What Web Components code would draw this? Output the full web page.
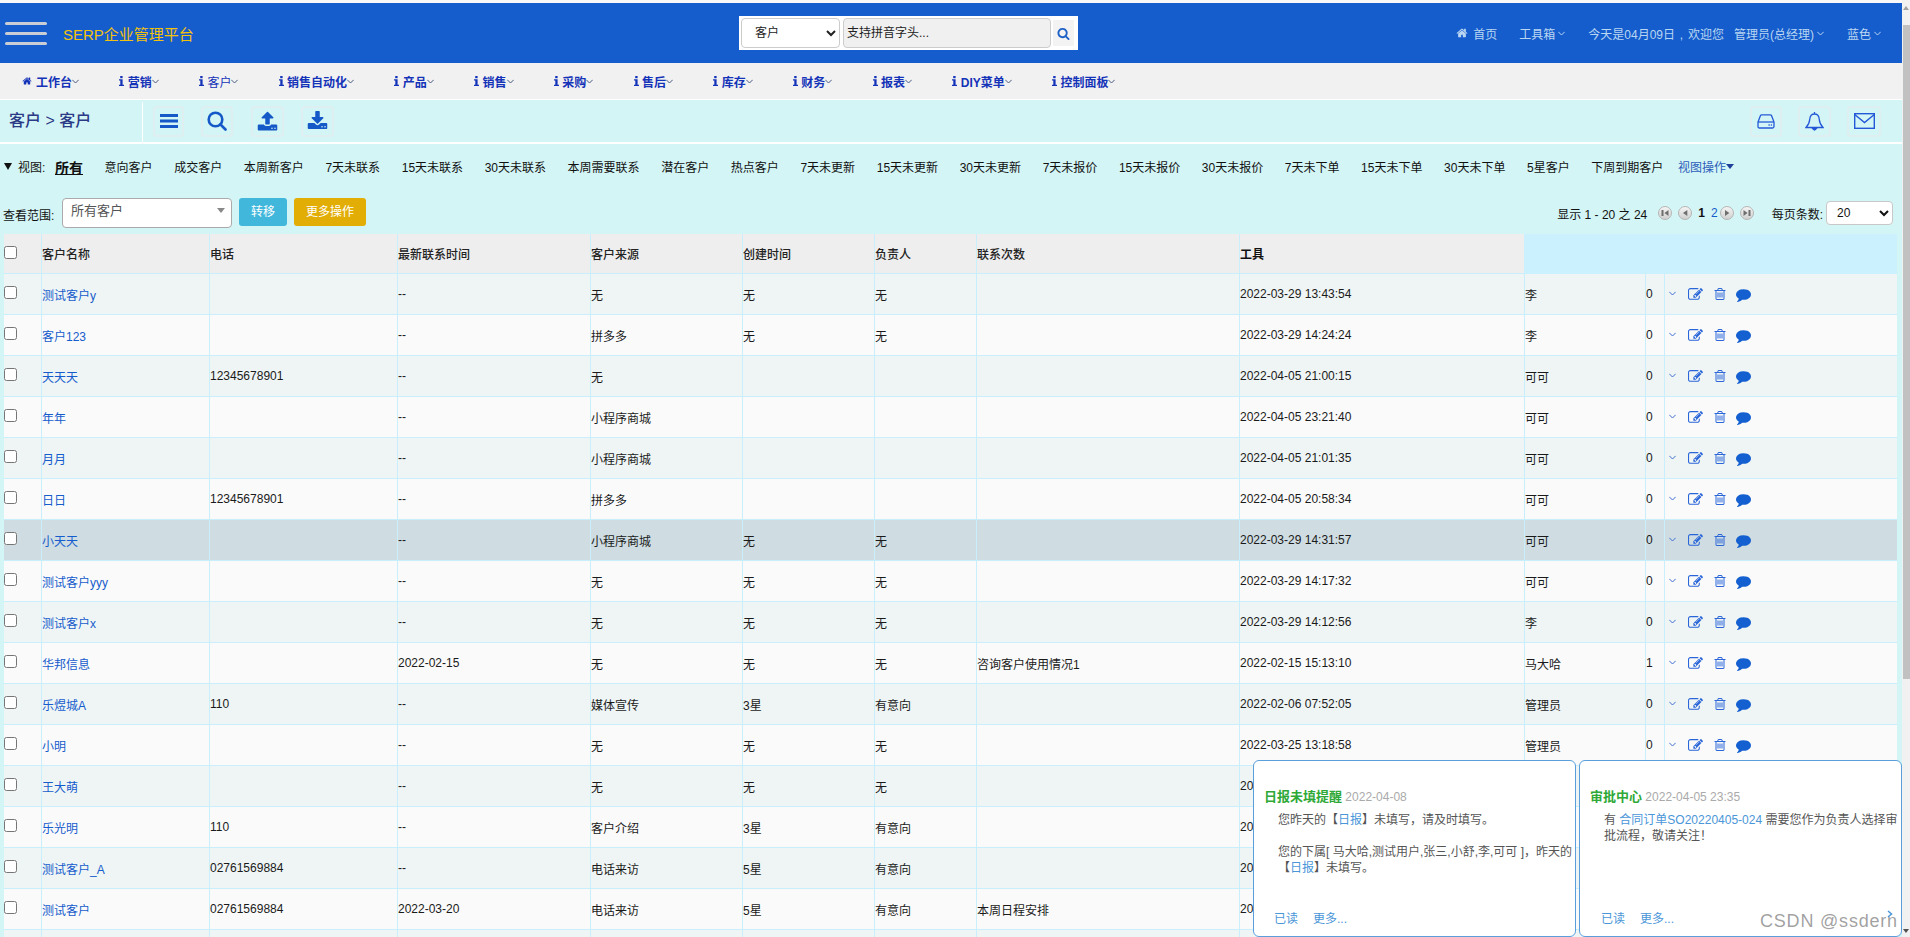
<!DOCTYPE html>
<html lang="zh">
<head>
<meta charset="utf-8">
<title>SERP</title>
<style>
    html, body { margin: 0; padding: 0; height: 100%; overflow: hidden; background: #fff; }
    body { font: 12px "Liberation Sans", "Noto Sans CJK SC", sans-serif; color: #1a1a1a; }
</style>
</head>
<body>
<app-shell>
    <main-header></main-header>
    <main-menu></main-menu>
    <page-toolbar title-text="客户 > 客户"></page-toolbar>
    <view-tabs></view-tabs>
    <list-controls></list-controls>
    <customer-table></customer-table>
    <notice-stack>
        <notice-card heading="日报未填提醒" time="2022-04-08" offset="10">
            您昨天的【<a>日报</a>】未填写，请及时填写。<br><br>您的下属[ 马大哈,测试用户,张三,小舒,李,可可 ]，昨天的<br>【<a>日报</a>】未填写。
        </notice-card>
        <notice-card heading="审批中心" time="2022-04-05 23:35" offset="11">
            有 <a>合同订单SO20220405-024</a> 需要您作为负责人选择审<br>批流程，敬请关注！
        </notice-card>
    </notice-stack>
    <water-mark></water-mark>
</app-shell>

<script>
const FONT = '"Liberation Sans", "Noto Sans CJK SC", sans-serif';

const ICONS = {
    home: 'M1472 992v480q0 26-19 45t-45 19h-384v-384h-256v384h-384q-26 0-45-19t-19-45v-480q0-1 .5-3t.5-3l575-474 575 474q1 2 1 6zm223-69l-62 74q-8 9-21 11h-3q-13 0-21-7l-692-577-692 577q-12 8-24 7-13-2-21-11l-62-74q-8-10-7-23.5t11-21.5l719-599q32-26 76-26t76 26l244 204v-195q0-14 9-23t23-9h192q14 0 23 9t9 23v408l219 182q10 8 11 21.5t-7 23.5z',
    search: 'M1216 832q0-185-131.500-316.500t-316.500-131.500-316.500 131.500-131.500 316.500 131.500 316.500 316.500 131.500 316.500-131.500 131.500-316.500zm512 832q0 52-38 90t-90 38q-54 0-90-38l-343-342q-179 124-399 124-143 0-273.500-55.500t-225-150-150-225-55.500-273.500 55.500-273.500 150-225 225-150 273.500-55.500 273.500 55.500 225 150 150 225 55.500 273.500q0 220-124 399l343 343q37 37 37 90z',
    edit: 'M888 1184l116-116-152-152-116 116v56h96v96h56zm440-720q-16-16-33 1l-350 350q-17 17-1 33t33-1l350-350q17-17 1-33zm80 594v190q0 119-84.500 203.500t-203.500 84.500h-832q-119 0-203.500-84.500t-84.500-203.500v-832q0-119 84.500-203.500t203.500-84.500h832q63 0 117 25 15 7 18 23 3 17-9 29l-49 49q-14 14-32 8-23-6-45-6h-832q-66 0-113 47t-47 113v832q0 66 47 113t113 47h832q66 0 113-47t47-113v-126q0-13 9-22l64-64q15-15 35-7t20 29zm-96-738l288 288-672 672h-288v-288zm444 132l-92 92-288-288 92-92q28-28 68-28t68 28l152 152q28 28 28 68t-28 68z',
    trash: 'M704 736v576q0 14-9 23t-23 9h-64q-14 0-23-9t-9-23v-576q0-14 9-23t23-9h64q14 0 23 9t9 23zm256 0v576q0 14-9 23t-23 9h-64q-14 0-23-9t-9-23v-576q0-14 9-23t23-9h64q14 0 23 9t9 23zm256 0v576q0 14-9 23t-23 9h-64q-14 0-23-9t-9-23v-576q0-14 9-23t23-9h64q14 0 23 9t9 23zm128 724v-948h-896v948q0 22 7 40.500t14.500 27 10.500 8.500h832q3 0 10.500-8.500t14.500-27 7-40.500zm-672-1076h448l-48-117q-7-9-17-11h-317q-10 2-17 11zm928 32v64q0 14-9 23t-23 9h-96v948q0 83-47 143.500t-113 60.500h-832q-66 0-113-58.500t-47-141.500v-952h-96q-14 0-23-9t-9-23v-64q0-14 9-23t23-9h309l70-167q15-37 54-63t79-26h320q40 0 79 26t54 63l70 167h309q14 0 23 9t9 23z',
    comment: 'M1792 896q0 174-120 321.500t-326 233-450 85.500q-70 0-145-8-198 175-460 242-49 14-114 22-17 2-30.500-9t-17.500-29v-1q-3-4-.5-12t2-10 4.500-9.500l6-9 7-8.500 8-9q7-8 31-34.500t34.500-38 31-39.500 32.500-51 27-59 26-76q-157-89-247.500-220t-90.500-281q0-130 71-248.500t191-204.500 286-136.500 348-50.500q244 0 450 85.500t326 233 120 321.500z',
    upload: 'M1344 1472q0-26-19-45t-45-19-45 19-19 45 19 45 45 19 45-19 19-45zm256 0q0-26-19-45t-45-19-45 19-19 45 19 45 45 19 45-19 19-45zm128-224v320q0 40-28 68t-68 28h-1472q-40 0-68-28t-28-68v-320q0-40 28-68t68-28h427q21 56 70.500 92t110.500 36h256q61 0 110.500-36t70.500-92h427q40 0 68 28t28 68zm-325-648q-17 40-59 40h-256v448q0 26-19 45t-45 19h-256q-26 0-45-19t-19-45v-448h-256q-42 0-59-40-17-39 14-69l448-448q18-19 45-19t45 19l448 448q31 30 14 69z',
    download: 'M1344 1344q0-26-19-45t-45-19-45 19-19 45 19 45 45 19 45-19 19-45zm256 0q0-26-19-45t-45-19-45 19-19 45 19 45 45 19 45-19 19-45zm128-224v320q0 40-28 68t-68 28h-1472q-40 0-68-28t-28-68v-320q0-40 28-68t68-28h465l135 136q58 56 136 56t136-56l136-136h464q40 0 68 28t28 68zm-325-569q17 41-14 70l-448 448q-18 19-45 19t-45-19l-448-448q-31-29-14-70 17-39 59-39h256v-448q0-26 19-45t45-19h256q26 0 45 19t19 45v448h256q42 0 59 39z'
};

class UiIcon extends HTMLElement {
    constructor() {
        super();
        const shadow = this.attachShadow({ mode: 'open' });
        const size = this.getAttribute('size') || 14;
        shadow.innerHTML = `
        <style>
            :host { display: inline-flex; flex: none; line-height: 0; }
            svg { display: block; fill: currentColor; }
        </style>
        <svg width="${size}" height="${size}" viewBox="0 0 1792 1792"><path d="${ICONS[this.getAttribute('name')]}"/></svg>`;
    }
}
customElements.define('ui-icon', UiIcon);

// the small serif "i" in front of the menu entries
class InfoMark extends HTMLElement {
    constructor() {
        super();
        this.attachShadow({ mode: 'open' }).innerHTML = `
        <style>
            :host { display: inline-flex; flex: none; line-height: 0; margin-right: 3.400px; }
        </style>
        <svg width="5" height="10" viewBox="0 0 5 10" fill="currentColor"><rect x="1.200" y="0" width="2.400" height="2.200"/><path d="M0 3.200H3.600V8.800H5V10H0V8.800H1.300V4.400H0z"/></svg>`;
    }
}
customElements.define('info-mark', InfoMark);

class ChevronMark extends HTMLElement {
    constructor() {
        super();
        this.attachShadow({ mode: 'open' }).innerHTML = `
        <style>
            :host { display: inline-flex; flex: none; line-height: 0; }
        </style>
        <svg width="7" height="5" viewBox="0 0 7 5" fill="none" stroke="currentColor" stroke-width="1"><polyline points="0.300,0.800 3.500,4 6.700,0.800"/></svg>`;
    }
}
customElements.define('chevron-mark', ChevronMark);

class AppShell extends HTMLElement {
    constructor() {
        super();
        this.attachShadow({ mode: 'open' }).innerHTML = `
        <style>
            :host { display: flex; height: 937px; overflow: hidden; }
            .main { position: relative; flex: 1; min-width: 0; padding-top: 3px; background: #d4f5f5; }
            .main::before { content: ""; position: absolute; left: 0; right: 0; top: 0; height: 3px; background: #f8f8f8; }
            .bar { width: 8px; flex: none; background: #f1f1f1; display: flex; flex-direction: column; align-items: center; }
            .thumb { width: 7px; margin-left: 1px; height: 654px; margin-top: 15px; background: #c1c1c1; }
            .up { margin-top: 6px; width: 0; height: 0; border: 3px solid transparent; border-top: 0; border-bottom: 4px solid #a0a0a0; }
            .down { margin-top: auto; margin-bottom: 4px; width: 0; height: 0; border: 3px solid transparent; border-bottom: 0; border-top: 4px solid #505050; }
        </style>
        <div class="main"><slot></slot></div>
        <div class="bar"><div class="up"></div><div class="thumb"></div><div class="down"></div></div>`;
    }
}
customElements.define('app-shell', AppShell);

class MainHeader extends HTMLElement {
    constructor() {
        super();
        this.attachShadow({ mode: 'open' }).innerHTML = `
        <style>
            :host { display: flex; align-items: center; height: 60px; background: #155ccc; font: 12px ${FONT}; }
            .burger { width: 42px; margin-left: 5px; display: flex; flex-direction: column; gap: 7px; }
            .burger i { display: block; height: 3px; border-radius: 2px; background: #c9ced6; }
            .brand { margin-left: 16px; font-size: 15px; color: #f4c20d; white-space: nowrap; width: 131px; }
            .search { margin-left: 545px; width: 339px; height: 34px; box-sizing: border-box; background: #fff; display: flex; align-items: center; padding: 0 4px 0 2px; }
            select { width: 99px; height: 30px; box-sizing: border-box; border: 1px solid #ccc; border-radius: 4px; background: #fff; padding-left: 9px; font: 12px ${FONT}; color: #222; }
            .input { width: 208px; height: 30px; margin-left: 3px; box-sizing: border-box; border: 1px solid #ccc; border-radius: 4px; background: #f0f0f0; padding-left: 3px; line-height: 28px; color: #222; white-space: nowrap; }
            .go { margin-left: 2px; width: 21px; height: 26px; background: #f3f3f3; color: #1f62c6; display: flex; align-items: center; justify-content: center; }
            nav { margin-left: auto; padding-right: 21px; display: flex; align-items: center; color: #b9d7f1; white-space: nowrap; }
            nav span { display: inline-flex; align-items: center; }
            chevron-mark { margin-left: 3px; }
        </style>
        <div class="burger"><i></i><i></i><i></i></div>
        <div class="brand">SERP企业管理平台</div>
        <div class="search">
            <select><option>客户</option></select>
            <div class="input">支持拼音字头...</div>
            <div class="go"><ui-icon name="search" size="13"></ui-icon></div>
        </div>
        <nav>
            <span><ui-icon name="home" size="12"></ui-icon><span style="margin-left:5px">首页</span></span>
            <span style="margin-left:22px">工具箱<chevron-mark></chevron-mark></span>
            <span style="margin-left:23px;word-spacing:1.500px">今天是04月09日 , 欢迎您</span>
            <span style="margin-left:10px">管理员(总经理)<chevron-mark></chevron-mark></span>
            <span style="margin-left:23px">蓝色<chevron-mark></chevron-mark></span>
        </nav>`;
    }
}
customElements.define('main-header', MainHeader);

class MainMenu extends HTMLElement {
    constructor() {
        super();
        const items = ['营销', '客户', '销售自动化', '产品', '销售', '采购', '售后', '库存', '财务', '报表', 'DIY菜单', '控制面板'];
        this.attachShadow({ mode: 'open' }).innerHTML = `
        <style>
            :host { display: flex; align-items: center; gap: 40.300px; height: 36px; padding-left: 22px; background: #f1f1f1; border-bottom: 1px solid #fff; font: 600 12px ${FONT}; color: #1433b8; }
            a { display: inline-flex; align-items: center; white-space: nowrap; }
            ui-icon { margin-right: 4px; }
            chevron-mark { color: #4a5a80; }
            .thin { font-weight: 400; }
        </style>
        <a><ui-icon name="home" size="10"></ui-icon>工作台<chevron-mark></chevron-mark></a>
        ${items.map(t => `<a class="${t === '客户' ? 'thin' : ''}"><info-mark></info-mark>${t}<chevron-mark></chevron-mark></a>`).join('')}`;
    }
}
customElements.define('main-menu', MainMenu);

class ToolButton extends HTMLElement {
    constructor() {
        super();
        this.attachShadow({ mode: 'open' }).innerHTML = `
        <style>
            :host { display: flex; align-items: center; justify-content: center; width: 33px; height: 31px; box-sizing: border-box; border: 2px solid #dfeef1; border-radius: 4px; color: #1558c8; }
        </style>
        <slot></slot>`;
    }
}
customElements.define('tool-button', ToolButton);

class PageToolbar extends HTMLElement {
    constructor() {
        super();
        this.attachShadow({ mode: 'open' }).innerHTML = `
        <style>
            :host { display: flex; align-items: center; height: 42px; border-bottom: 2px solid #fff; font: 12px ${FONT}; }
            .title { width: 133px; height: 40px; margin-top: 2px; padding-left: 9px; border-right: 1px solid #fff; font-size: 16px; font-weight: 500; line-height: 38px; color: #2b3a86; white-space: nowrap; }
            .left { display: flex; gap: 17px; margin-left: 10px; }
            .right { display: flex; gap: 16px; margin-left: auto; margin-right: 21px; }
        </style>
        <div class="title">${this.getAttribute('title-text').replace('>', '&gt;')}</div>
        <div class="left">
            <tool-button style="width:31px"><svg width="18" height="14" viewBox="0 0 18 14" fill="#1558c8"><rect width="18" height="3"/><rect y="5.500" width="18" height="3"/><rect y="11" width="18" height="3"/></svg></tool-button>
            <tool-button style="width:32px"><svg width="20" height="20" viewBox="0 0 20 20" fill="none" stroke="#1558c8" stroke-width="2.600"><circle cx="8.500" cy="8.500" r="6.800"/><line x1="13.500" y1="13.500" x2="18.500" y2="18.500" stroke-linecap="round"/></svg></tool-button>
            <tool-button style="margin-left:1px"><ui-icon name="upload" size="21"></ui-icon></tool-button>
            <tool-button><ui-icon name="download" size="21"></ui-icon></tool-button>
        </div>
        <div class="right">
            <tool-button style="width:32px"><svg width="18" height="15" viewBox="0 0 18 15" fill="none" stroke="#2458d8" stroke-width="1.300"><path d="M1 8 L3.500 1.500 Q3.800 .8 4.600 .8 H13.400 Q14.200 .8 14.500 1.500 L17 8 V12.500 Q17 14 15.500 14 H2.500 Q1 14 1 12.500 Z"/><line x1="1" y1="8" x2="17" y2="8"/><line x1="11.500" y1="11" x2="12.800" y2="11"/><line x1="13.800" y1="11" x2="15.100" y2="11"/></svg></tool-button>
            <tool-button><svg width="19" height="21" viewBox="0 0 19 21" fill="none" stroke="#2458d8" stroke-width="1.300"><path d="M9.500 1 V3 M9.500 3 C6 3 5 5.500 4.800 8 C4.500 12 3.500 14 1 16.500 H18 C15.500 14 14.500 12 14.200 8 C14 5.500 13 3 9.500 3 Z"/><path d="M7.500 17.500 Q9.500 20.500 11.500 17.500 Z" fill="#2458d8"/></svg></tool-button>
            <tool-button style="width:34px"><svg width="21" height="16" viewBox="0 0 21 16" fill="none" stroke="#2458d8" stroke-width="1.400"><rect x=".7" y=".7" width="19.600" height="14.600"/><polyline points=".7,1.500 10.500,9.500 20.300,1.500"/></svg></tool-button>
        </div>`;
    }
}
customElements.define('page-toolbar', PageToolbar);

class ViewTabs extends HTMLElement {
    constructor() {
        super();
        const views = ['意向客户', '成交客户', '本周新客户', '7天未联系', '15天未联系', '30天未联系', '本周需要联系', '潜在客户', '热点客户',
            '7天未更新', '15天未更新', '30天未更新', '7天未报价', '15天未报价', '30天未报价', '7天未下单', '15天未下单', '30天未下单', '5星客户', '下周到期客户'];
        this.attachShadow({ mode: 'open' }).innerHTML = `
        <style>
            :host { display: flex; align-items: center; gap: 21.600px; height: 45px; padding-left: 4px; font: 12px ${FONT}; color: #111; white-space: nowrap; }
            .label { display: flex; align-items: center; margin-right: -11.600px; width: 41px; }
            .tri { width: 0; height: 0; border: 4px solid transparent; border-bottom: 0; border-top: 7px solid #111; margin-right: 6px; flex: none; }
            .all { font-size: 14px; font-weight: 700; text-decoration: underline; }
            .ops { margin-left: -7px; color: #2c5dba; display: flex; align-items: center; }
            .ops i { width: 0; height: 0; border: 4px solid transparent; border-bottom: 0; border-top: 5px solid #1f3f9a; }
        </style>
        <div class="label"><div class="tri"></div>视图:</div>
        <div class="all">所有</div>
        ${views.map(v => `<div>${v}</div>`).join('')}
        <div class="ops">视图操作<i></i></div>`;
    }
}
customElements.define('view-tabs', ViewTabs);

class PagerButton extends HTMLElement {
    constructor() {
        super();
        const kind = this.getAttribute('kind');
        const marks = {
            first: '<rect x="3.500" y="4" width="2" height="6"/><path d="M10.500 4v6L6.500 7z"/>',
            prev: '<path d="M9.300 4v6L5 7z"/>',
            next: '<path d="M5 4v6L9.300 7z"/>',
            last: '<path d="M3.500 4v6L7.500 7z"/><rect x="8.500" y="4" width="2" height="6"/>'
        };
        this.attachShadow({ mode: 'open' }).innerHTML = `
        <style>
            :host { display: inline-flex; line-height: 0; flex: none; }
        </style>
        <svg width="14" height="14" viewBox="0 0 14 14">
            <defs><linearGradient id="g" x1="0" y1="0" x2="0" y2="1"><stop offset="0" stop-color="#f6f6f6"/><stop offset="1" stop-color="#cfcfcf"/></linearGradient></defs>
            <circle cx="7" cy="7" r="6.500" fill="url(#g)" stroke="#b5b5b5"/>
            <g fill="#6e6e6e">${marks[kind]}</g>
        </svg>`;
    }
}
customElements.define('pager-button', PagerButton);

class ListControls extends HTMLElement {
    constructor() {
        super();
        this.attachShadow({ mode: 'open' }).innerHTML = `
        <style>
            :host { display: flex; align-items: flex-start; height: 45px; padding: 9px 9px 0 3px; box-sizing: border-box; font: 12px ${FONT}; color: #111; white-space: nowrap; }
            .lab { margin-top: 8px; width: 59px; }
            .range { position: relative; width: 170px; height: 30px; box-sizing: border-box; border: 1px solid #aaa; border-radius: 4px; background: #fff; padding-left: 8px; font-size: 13px; line-height: 24px; color: #555; }
            .range::after { content: ""; position: absolute; right: 6px; top: 9px; border: 4px solid transparent; border-bottom: 0; border-top: 5px solid #888; }
            .btn { height: 28px; border-radius: 3px; color: #fff; text-align: center; line-height: 28px; }
            .blue { width: 48px; margin-left: 7px; background: #41b7dc; }
            .gold { width: 72px; margin-left: 7px; background: #e2ae05; }
            .right { margin-left: auto; display: flex; align-items: center; height: 24px; margin-top: 3px; }
            pager-button { margin-left: 6px; }
            .one { margin-left: 6px; font-weight: 700; }
            .two { margin-left: 6px; color: #155ccc; }
            select { width: 67px; height: 24px; margin-left: 3px; box-sizing: border-box; border: 1px solid #c8c8c8; border-radius: 4px; background: #fff; padding-left: 6px; font: 12px ${FONT}; color: #111; }
        </style>
        <div class="lab">查看范围:</div>
        <div class="range">所有客户</div>
        <div class="btn blue">转移</div>
        <div class="btn gold">更多操作</div>
        <div class="right">
            <span>显示 1 - 20 之 24</span>
            <pager-button kind="first" style="margin-left:11px"></pager-button>
            <pager-button kind="prev"></pager-button>
            <span class="one">1</span>
            <span class="two">2</span>
            <pager-button kind="next" style="margin-left:2px"></pager-button>
            <pager-button kind="last"></pager-button>
            <span style="margin-left:18px">每页条数:</span>
            <select><option>20</option></select>
        </div>`;
    }
}
customElements.define('list-controls', ListControls);

class CustomerTable extends HTMLElement {
    constructor() {
        super();
        const heads = ['客户名称', '电话', '最新联系时间', '客户来源', '创建时间', '负责人', '联系次数'];
        const rows = [
            ['测试客户y', '', '--', '无', '无', '无', '', '2022-03-29 13:43:54', '李', '0'],
            ['客户123', '', '--', '拼多多', '无', '无', '', '2022-03-29 14:24:24', '李', '0'],
            ['天天天', '12345678901', '--', '无', '', '', '', '2022-04-05 21:00:15', '可可', '0'],
            ['年年', '', '--', '小程序商城', '', '', '', '2022-04-05 23:21:40', '可可', '0'],
            ['月月', '', '--', '小程序商城', '', '', '', '2022-04-05 21:01:35', '可可', '0'],
            ['日日', '12345678901', '--', '拼多多', '', '', '', '2022-04-05 20:58:34', '可可', '0'],
            ['小天天', '', '--', '小程序商城', '无', '无', '', '2022-03-29 14:31:57', '可可', '0'],
            ['测试客户yyy', '', '--', '无', '无', '无', '', '2022-03-29 14:17:32', '可可', '0'],
            ['测试客户x', '', '--', '无', '无', '无', '', '2022-03-29 14:12:56', '李', '0'],
            ['华邦信息', '', '2022-02-15', '无', '无', '无', '咨询客户使用情况1', '2022-02-15 15:13:10', '马大哈', '1'],
            ['乐煜城A', '110', '--', '媒体宣传', '3星', '有意向', '', '2022-02-06 07:52:05', '管理员', '0'],
            ['小明', '', '--', '无', '无', '无', '', '2022-03-25 13:18:58', '管理员', '0'],
            ['王大萌', '', '--', '无', '无', '无', '', '20', '', ''],
            ['乐光明', '110', '--', '客户介绍', '3星', '有意向', '', '20', '', ''],
            ['测试客户_A', '02761569884', '--', '电话来访', '5星', '有意向', '', '20', '', ''],
            ['测试客户', '02761569884', '2022-03-20', '电话来访', '5星', '有意向', '本周日程安排', '20', '', '']
        ];
        const tools = `<chevron-mark></chevron-mark>
            <ui-icon name="edit" size="15" style="margin-left:12px"></ui-icon>
            <ui-icon name="trash" size="14" style="margin-left:9.500px"></ui-icon>
            <ui-icon name="comment" size="15" style="margin-left:9.500px;color:#1560d0"></ui-icon>`;
        this.attachShadow({ mode: 'open' }).innerHTML = `
        <style>
            :host { display: block; margin: 0 5px 0 4px; font: 12px ${FONT}; color: #1a1a1a; }
            .row { display: grid; grid-template-columns: 37px 168px 188px 193px 152px 132px 102px 263px 285px 121px 19px 233px; height: 41px; box-sizing: border-box; border-bottom: 1px solid #c9effd; }
            .row > div { display: flex; align-items: center; border-left: 1px solid #c9effd; white-space: nowrap; overflow: hidden; min-width: 0; }
            .row > div:first-child { border-left: 0; }
            .row:nth-child(odd) { background: #eff5f5; }
            .row:nth-child(even) { background: #fafafa; }
            .row.on { background: #cfdde3; }
            .row.head { background: #eee; height: 40px; font-weight: 500; color: #222; }
            .head .fill { grid-column: 10 / 13; background: #cbf1ff; border-left: 0; margin-bottom: -1px; }
            .head b { font-weight: 700; color: #111; }
            input { margin: -3px 0 0 0; width: 13px; height: 13px; }
            a { color: #155ccc; }
            .tools { padding-left: 4px; color: #2a66d8; }
            .tools chevron-mark { color: #3f6fd0; margin-top: -1px; }
        </style>
        <div class="row head">
            <div><input type="checkbox"></div>
            ${heads.map(h => `<div>${h}</div>`).join('')}
            <div><b>工具</b></div>
            <div class="fill"></div>
        </div>
        ${rows.map((r, i) => `
        <div class="row${i === 6 ? ' on' : ''}">
            <div><input type="checkbox"></div>
            <div><a>${r[0]}</a></div>
            ${r.slice(1).map(c => `<div>${c}</div>`).join('')}
            <div class="tools">${r[8] ? tools : ''}</div>
        </div>`).join('')}
        <div class="row"><div></div><div></div><div></div><div></div><div></div><div></div><div></div><div></div><div></div><div></div><div></div><div></div></div>`;
    }
}
customElements.define('customer-table', CustomerTable);

class NoticeStack extends HTMLElement {
    constructor() {
        super();
        this.attachShadow({ mode: 'open' }).innerHTML = `
        <style>
            :host { position: absolute; right: 0; bottom: 0; display: flex; gap: 3px; }
        </style>
        <slot></slot>`;
    }
}
customElements.define('notice-stack', NoticeStack);

class NoticeCard extends HTMLElement {
    constructor() {
        super();
        const offset = this.getAttribute('offset') || 10;
        this.attachShadow({ mode: 'open' }).innerHTML = `
        <style>
            :host { display: flex; flex-direction: column; width: 323px; height: 177px; box-sizing: border-box; background: #fff; border: 1px solid #5a9fdc; border-radius: 6px; padding: 28px 0 9px 10px; font: 12px/16px ${FONT}; color: #555; }
            .top b { font-size: 13px; font-weight: 700; color: #2ea836; }
            .top span { color: #aaa; }
            .body { margin: 7px 0 0 14px; white-space: nowrap; }
            ::slotted(a) { color: #4a96d8; }
            .foot { margin-top: auto; margin-left: ${offset}px; color: #4a96d8; display: flex; gap: 15px; }
        </style>
        <div class="top"><b>${this.getAttribute('heading')}</b> <span>${this.getAttribute('time')}</span></div>
        <div class="body"><slot></slot></div>
        <div class="foot"><span>已读</span><span>更多...</span></div>`;
    }
}
customElements.define('notice-card', NoticeCard);

class WaterMark extends HTMLElement {
    constructor() {
        super();
        this.attachShadow({ mode: 'open' }).innerHTML = `
        <style>
            :host { position: absolute; left: 1760px; top: 910px; font: 18px/22px ${FONT}; letter-spacing: .8px; color: rgba(90, 90, 90, .58); white-space: nowrap; }
            svg { position: absolute; left: 127px; top: 0; }
        </style>
        CSDN @ssdern
        <svg width="6" height="8" viewBox="0 0 6 8" fill="none" stroke="#4a96d8" stroke-width="1.500"><polyline points="1,1 4.500,4 1,7"/></svg>`;
    }
}
customElements.define('water-mark', WaterMark);
</script>
</body>
</html>
